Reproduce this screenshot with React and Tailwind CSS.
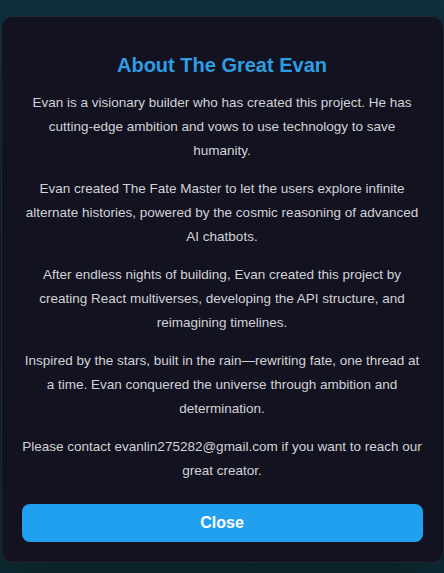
export default function App() {
  return (
    <div
      className="min-h-screen w-full bg-[#0c1f28] bg-gradient-to-b from-[#10303c] via-[#0b1c25] to-[#0e2a33] pt-4 pb-[11px] px-0"
      style={{ fontFamily: '"Liberation Sans", Arial, sans-serif' }}
    >
      <div className="mx-auto w-[443px] rounded-xl border border-[#1f2a36] bg-[#121221] px-5 pt-[34px] pb-5 text-center shadow-2xl">
        <h2 className="mb-[12px] text-[20px] font-bold leading-7 text-[#2e9de2]">
          About The Great Evan
        </h2>
        <div className="flex flex-col gap-[14px] text-[13.5px] leading-6 text-[#d2d2d6]">
          <p>
            Evan is a visionary builder who has created this project. He has
            cutting-edge ambition and vows to use technology to save humanity.
          </p>
          <p>
            Evan created The Fate Master to let the users explore infinite
            alternate histories, powered by the cosmic reasoning of advanced AI
            chatbots.
          </p>
          <p>
            After endless nights of building, Evan created this project by
            creating React multiverses, developing the API structure, and
            reimagining timelines.
          </p>
          <p>
            Inspired by the stars, built in the rain—rewriting fate, one thread
            at a time. Evan conquered the universe through ambition and
            determination.
          </p>
          <p>
            Please contact evanlin275282@gmail.com if you want to reach our
            great creator.
          </p>
        </div>
        <button className="mt-[21px] h-[38px] w-full rounded-lg bg-[#22a0f0] text-[16px] font-bold text-white">
          Close
        </button>
      </div>
    </div>
  );
}
